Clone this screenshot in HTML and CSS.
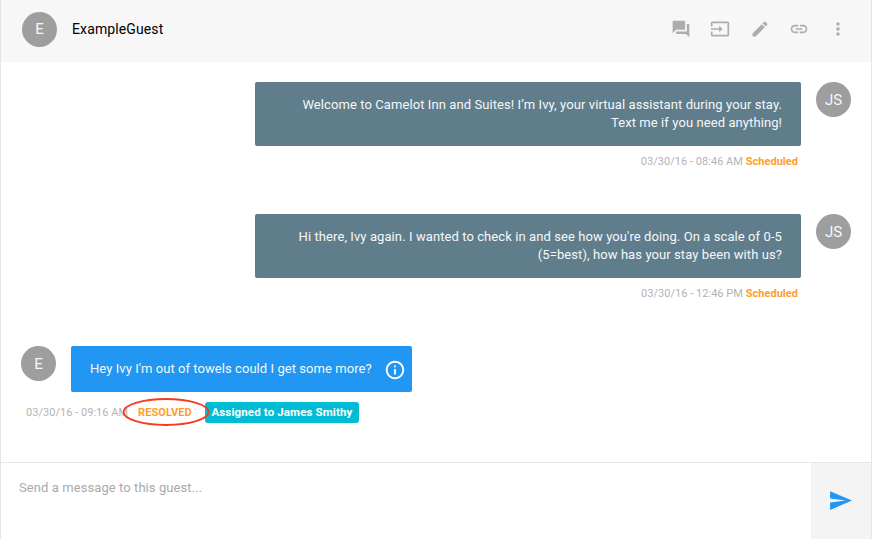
FILE: index.html
```html
<!DOCTYPE html>
<html lang="en">
<head>
<meta charset="utf-8">
<title>ExampleGuest</title>
<link rel="stylesheet" href="styles.css">
</head>
<body>
<main class="chat">
  <header class="header">
    <div class="avatar">E</div>
    <h1 class="guest">ExampleGuest</h1>
    <nav class="actions">
      <svg viewBox="0 0 24 24"><path d="M21 6h-2v9H6v2c0 .55.45 1 1 1h11l4 4V7c0-.55-.45-1-1-1zm-4 6V3c0-.55-.45-1-1-1H3c-.55 0-1 .45-1 1v14l4-4h10c.55 0 1-.45 1-1z"/></svg>
      <svg viewBox="0 0 24 24"><path d="M21 3.01H3c-1.1 0-2 .9-2 2V9h2V4.99h18v14.03H3V15H1v4.01c0 1.1.9 1.98 2 1.98h18c1.1 0 2-.88 2-1.98v-14c0-1.11-.9-2-2-2zM11 16l4-4-4-4v3H1v2h10v3z"/></svg>
      <svg viewBox="0 0 24 24"><path d="M3 17.25V21h3.75L17.81 9.94l-3.75-3.75L3 17.25zM20.71 7.04c.39-.39.39-1.02 0-1.41l-2.34-2.34c-.39-.39-1.02-.39-1.41 0l-1.83 1.83 3.75 3.75 1.83-1.83z"/></svg>
      <svg viewBox="0 0 24 24"><path d="M3.9 12c0-1.71 1.39-3.1 3.1-3.1h4V7H7c-2.76 0-5 2.24-5 5s2.24 5 5 5h4v-1.900H7c-1.710 0-3.100-1.390-3.100-3.100zM8 13h8v-2H8v2zm9-6h-4v1.900h4c1.710 0 3.100 1.390 3.100 3.100s-1.390 3.100-3.100 3.100h-4V17h4c2.760 0 5-2.240 5-5s-2.240-5-5-5z"/></svg>
      <svg viewBox="0 0 24 24"><path d="M12 8c1.100 0 2-.9 2-2s-.9-2-2-2-2 .9-2 2 .9 2 2 2zm0 2c-1.100 0-2 .9-2 2s.9 2 2 2 2-.9 2-2-.9-2-2-2zm0 6c-1.100 0-2 .9-2 2s.9 2 2 2 2-.9 2-2-.9-2-2-2z"/></svg>
    </nav>
  </header>
  <section class="messages">
    <article class="message sent">
      <div class="content">
        <p class="bubble">Welcome to Camelot Inn and Suites! I’m Ivy, your virtual assistant during your stay.<br>Text me if you need anything!</p>
        <div class="meta"><time>03/30/16 - 08:46 AM</time> <b>Scheduled</b></div>
      </div>
      <div class="avatar">JS</div>
    </article>
    <article class="message sent">
      <div class="content">
        <p class="bubble">Hi there, Ivy again. I wanted to check in and see how you're doing. On a scale of 0-5<br>(5=best), how has your stay been with us?</p>
        <div class="meta"><time>03/30/16 - 12:46 PM</time> <b>Scheduled</b></div>
      </div>
      <div class="avatar">JS</div>
    </article>
    <article class="message received">
      <div class="avatar">E</div>
      <p class="bubble"><span class="text">Hey Ivy I'm out of towels could I get some more?</span>
        <svg class="info" viewBox="0 0 24 24"><path d="M11 17h2v-6h-2v6zm1-15C6.480 2 2 6.480 2 12s4.480 10 10 10 10-4.480 10-10S17.520 2 12 2zm0 18c-4.410 0-8-3.590-8-8s3.590-8 8-8 8 3.590 8 8-3.590 8-8 8zM11 9h2V7h-2v2z"/></svg>
      </p>
    </article>
    <div class="status">
      <time>03/30/16 - 09:16 AM</time>
      <span class="resolved"><b>RESOLVED</b><svg class="ring" viewBox="0 0 88 30"><ellipse cx="44" cy="15" rx="42.500" ry="13"/></svg></span>
      <span class="assigned">Assigned to James Smithy</span>
    </div>
  </section>
  <footer class="composer">
    <div class="input">Send a message to this guest...</div>
    <div class="send"><svg viewBox="0 0 24 24"><path d="M2.010 21L23 12 2.010 3 2 10l15 2-15 2z"/></svg></div>
  </footer>
</main>
</body>
</html>
```
FILE: styles.css
```css
* { box-sizing: border-box; }
body { margin: 0; font-family: Roboto, sans-serif; background: #fff; }
p, h1 { margin: 0; }
.chat { width: 872px; height: 539px; display: flex; flex-direction: column; border: solid #e5e5e5; border-width: 0 1px; overflow: hidden; }
.header { height: 62px; flex: none; display: flex; align-items: center; padding: 0 21px 4px; background: #f7f7f7; }
.avatar { width: 35px; height: 35px; flex: none; border-radius: 50%; background: #9e9e9e; color: #f7f7f7; font-size: 15px; display: flex; align-items: center; justify-content: center; }
.guest { font-size: 14px; font-weight: 400; letter-spacing: .12px; margin-left: 15px; color: #000; }
.actions { display: flex; gap: 19.2px; margin-left: auto; margin-right: 2px; }
.actions svg { width: 20px; height: 20px; fill: #adadad; }
.messages { height: 400px; flex: none; padding: 20px 20px 0; }
.message { display: flex; }
.sent { height: 132px; justify-content: flex-end; gap: 15px; }
.content { width: 546px; }
.bubble { color: #f5f8fa; font-size: 13px; line-height: 18px; letter-spacing: .085px; border-radius: 2px; }
.sent .bubble { height: 64px; padding: 14px 19px; background: #607d8b; text-align: right; white-space: nowrap; }
.meta { font-size: 11px; line-height: 14px; letter-spacing: .03px; color: #b3b3b3; text-align: right; padding: 9px 3px 0 0; }
b { color: #ff9d2b; font-weight: 700; }
.received { gap: 15px; }
.received .bubble { width: 341px; height: 46px; display: flex; align-items: center; padding: 0 6px 0 19px; background: #2196f3; letter-spacing: .06px; }
.info { width: 22px; height: 22px; margin: 2px 0 0 auto; fill: #fff; }
.status { width: 333px; height: 21px; display: flex; align-items: center; margin: 10px 0 0 5px; font-size: 11px; color: #b3b3b3; white-space: nowrap; }
.status time { width: 112px; letter-spacing: .03px; }
.resolved { position: relative; letter-spacing: .1px; }
.ring { position: absolute; left: -16px; top: -9px; width: 88px; height: 30px; fill: none; stroke: #f93822; stroke-width: 1.8; }
.assigned { height: 21px; width: 154px; margin-left: auto; color: #fff; font-size: 11.5px; letter-spacing: .13px; font-weight: 700; line-height: 21px; text-align: center; background: #00bcd4; border-radius: 3px; }
.composer { flex: 1; display: flex; border-top: 1px solid #e8e8e8; }
.input { flex: 1; padding: 16px 18px; font-size: 13px; line-height: 18px; letter-spacing: .08px; color: #aaa; }
.send { width: 60px; background: #f4f4f4; display: flex; align-items: center; justify-content: center; padding: 0 2px 1px 0; }
.send svg { width: 25px; height: 25px; fill: #2196f3; }
```
